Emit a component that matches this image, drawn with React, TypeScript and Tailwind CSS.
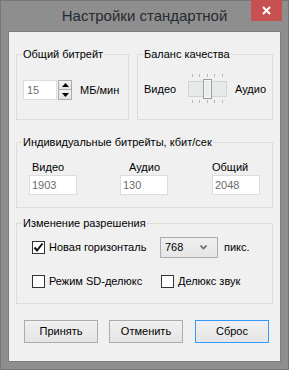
import React from "react";

const font = { fontFamily: '"Liberation Sans", Arial, sans-serif' };

function GroupLabel({ children }: { children: React.ReactNode }) {
  return (
    <div className="-mt-[7px] ml-[5px] w-fit bg-[#f0f0f0] px-[1px] text-[11px] leading-[13px] text-black">
      {children}
    </div>
  );
}

function Check({ checked }: { checked?: boolean }) {
  return (
    <div className="flex h-[13px] w-[13px] shrink-0 items-center justify-center border border-[#333333] bg-white">
      {checked && (
        <svg width="11" height="11" viewBox="0 0 11 11">
          <path d="M1.5 5.5 L4 8.5 L9.5 1.5" fill="none" stroke="#111" strokeWidth="2" />
        </svg>
      )}
    </div>
  );
}

function Field({ value }: { value: string }) {
  return (
    <div className="flex h-[20px] w-[48px] items-center border border-[#dcdcdc] bg-white pl-[2px] text-[11px] text-[#6d6d6d]">
      {value}
    </div>
  );
}

function Btn({ children, focused }: { children: React.ReactNode; focused?: boolean }) {
  return (
    <div
      className={
        "flex h-[23px] w-[74px] items-center justify-center border text-[11px] text-black bg-gradient-to-b from-[#f0f0f0] to-[#e5e5e5] " +
        (focused ? "border-[#3399ff]" : "border-[#acacac]")
      }
    >
      {children}
    </div>
  );
}

export default function App() {
  return (
    <div className="flex h-[370px] w-[289px] flex-col border border-[#767676] bg-[#8e8e8e]" style={font}>
      {/* title bar */}
      <div className="relative flex h-[30px] shrink-0 items-center justify-center">
        <span className="mt-[0px] text-[15px] text-[#262b30]">Настройки стандартной</span>
        <div className="absolute right-[6px] top-[-1px] flex h-[21px] w-[31px] items-center justify-center bg-[#c75050]">
          <svg width="9" height="9" viewBox="0 0 9 9">
            <path d="M1 1 L8 8 M8 1 L1 8" stroke="#fff" strokeWidth="2" />
          </svg>
        </div>
      </div>

      {/* client */}
      <div className="mx-[7px] flex h-[331px] flex-col border border-[#7d7d7d] bg-[#f0f0f0] px-[7px] pt-[22px]">
        {/* top row */}
        <div className="flex gap-[8px]">
          <div className="flex h-[66px] w-[113px] flex-col border border-[#dcdcdc]">
            <GroupLabel>Общий битрейт</GroupLabel>
            <div className="ml-[6px] mt-[19px] flex items-center">
              <div className="flex h-[20px] w-[34px] items-center border border-[#dcdcdc] bg-white pl-[3px] text-[11px] text-[#6d6d6d]">
                15
              </div>
              <div className="ml-[1px] flex h-[20px] w-[14px] flex-col">
                <div className="flex h-[10px] items-center justify-center border border-[#acacac] bg-gradient-to-b from-[#f2f2f2] to-[#e3e3e3]">
                  <svg width="7" height="4" viewBox="0 0 7 4">
                    <path d="M0 4 L3.5 0 L7 4 Z" fill="#000" />
                  </svg>
                </div>
                <div className="flex h-[10px] items-center justify-center border border-t-0 border-[#acacac] bg-gradient-to-b from-[#f2f2f2] to-[#e3e3e3]">
                  <svg width="7" height="4" viewBox="0 0 7 4">
                    <path d="M0 0 L3.5 4 L7 0 Z" fill="#000" />
                  </svg>
                </div>
              </div>
              <span className="ml-[8px] text-[11px] text-black">МБ/мин</span>
            </div>
          </div>

          <div className="flex h-[66px] w-[136px] flex-col border border-[#dcdcdc]">
            <GroupLabel>Баланс качества</GroupLabel>
            <div className="ml-[6px] mt-[13px] flex items-center">
              <span className="w-[44px] text-[11px] text-black">Видео</span>
              <svg width="39" height="30" viewBox="0 0 39 30">
                {[4, 11, 19, 26, 34].map((x) => (
                  <g key={x}>
                    <line x1={x + 0.5} y1="0" x2={x + 0.5} y2="3" stroke="#b8b8b8" />
                    <line x1={x + 0.5} y1="26" x2={x + 0.5} y2="29" stroke="#b8b8b8" />
                  </g>
                ))}
                <rect x="0.5" y="7.5" width="38" height="15" fill="#e7eaea" stroke="#d4d4d4" />
                <rect x="15.5" y="5.5" width="8" height="19" fill="#ebebeb" stroke="#9c9c9c" />
                <rect x="16.5" y="6.5" width="6" height="17" fill="none" stroke="#f8f8f8" />
              </svg>
              <span className="ml-[8px] text-[11px] text-black">Аудио</span>
            </div>
          </div>
        </div>

        {/* individual bitrates */}
        <div className="mt-[22px] flex h-[66px] flex-col border border-[#dcdcdc]">
          <GroupLabel>Индивидуальные битрейты, кбит/сек</GroupLabel>
          <div className="mt-[12px] flex">
            <div className="ml-[12px] flex flex-col">
              <span className="pl-[3px] text-[11px] leading-[13px] text-black">Видео</span>
              <div className="mt-[1px]"><Field value="1903" /></div>
            </div>
            <div className="ml-[43px] flex flex-col">
              <span className="pl-[9px] text-[11px] leading-[13px] text-black">Аудио</span>
              <div className="mt-[1px]"><Field value="130" /></div>
            </div>
            <div className="ml-[44px] flex flex-col">
              <span className="pl-[0px] text-[11px] leading-[13px] text-black">Общий</span>
              <div className="mt-[1px]"><Field value="2048" /></div>
            </div>
          </div>
        </div>

        {/* resolution */}
        <div className="mt-[15px] flex h-[81px] flex-col border border-[#dcdcdc]">
          <GroupLabel>Изменение разрешения</GroupLabel>
          <div className="ml-[15px] mt-[7px] flex h-[21px] items-center">
            <div className="flex w-[128px] items-center">
              <Check checked />
              <span className="ml-[4px] text-[11px] text-black">Новая горизонталь</span>
            </div>
            <div className="flex h-[21px] w-[58px] items-center justify-between border border-[#acacac] bg-gradient-to-b from-[#f0f0f0] to-[#e5e5e5] pl-[4px] pr-[10px] text-[11px] text-black">
              <span>768</span>
              <svg width="7" height="5" viewBox="0 0 7 5">
                <path d="M0.5 0.5 L3.5 3.5 L6.5 0.5" fill="none" stroke="#6a6a6a" strokeWidth="1.6" />
              </svg>
            </div>
            <span className="ml-[6px] text-[11px] text-black">пикс.</span>
          </div>
          <div className="ml-[15px] mt-[15px] flex items-center">
            <div className="flex w-[129px] items-center">
              <Check />
              <span className="ml-[4px] text-[11px] text-black">Режим SD-делюкс</span>
            </div>
            <Check />
            <span className="ml-[4px] text-[11px] text-black">Делюкс звук</span>
          </div>
        </div>

        {/* buttons */}
        <div className="ml-[8px] mt-[16px] flex">
          <Btn>Принять</Btn>
          <div className="ml-[11px]"><Btn>Отменить</Btn></div>
          <div className="ml-[12px]"><Btn focused>Сброс</Btn></div>
        </div>
      </div>
    </div>
  );
}
